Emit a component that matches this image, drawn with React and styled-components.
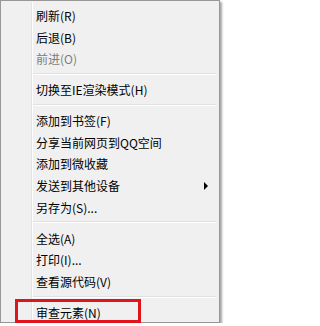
import React from 'react'
import styled, { createGlobalStyle } from 'styled-components'

const GlobalSt = createGlobalStyle`
  html, body {
    margin: 0;
    padding: 0;
    background: #ffffff;
  }
  body {
    font-family: "Noto Sans CJK SC", "Noto Sans", sans-serif;
  }
`

const groups = [
  [
    { label: '刷新(R)' },
    { label: '后退(B)' },
    { label: '前进(O)', disabled: true },
  ],
  [{ label: '切换至IE渲染模式(H)' }],
  [
    { label: '添加到书签(F)' },
    { label: '分享当前网页到QQ空间' },
    { label: '添加到微收藏' },
    { label: '发送到其他设备', sub: true },
    { label: '另存为(S)...' },
  ],
  [
    { label: '全选(A)' },
    { label: '打印(I)...' },
    { label: '查看源代码(V)' },
  ],
  [{ label: '审查元素(N)', marked: true }],
]

const App = () => {
  return (
    <>
      <GlobalSt />
      <MenuSt>
        {groups.map((group, gi) => (
          <React.Fragment key={gi}>
            {gi > 0 && <SeparatorSt />}
            {group.map(item => (
              <ItemSt key={item.label} $disabled={item.disabled}>
                <LabelSt>{item.label}</LabelSt>
                {item.sub && <ArrowSt />}
                {item.marked && <MarkSt />}
              </ItemSt>
            ))}
          </React.Fragment>
        ))}
      </MenuSt>
    </>
  )
}

export default App

const MenuSt = styled.div`
  position: relative;
  box-sizing: border-box;
  width: 220px;
  height: 323px;
  padding: 3px 2px 0 2px;
  background: #f0f0f0;
  border: 1px solid #979797;
  box-shadow: 2px 2px 2px rgba(0, 0, 0, 0.35);
  display: flex;
  flex-direction: column;

  &::before {
    content: '';
    position: absolute;
    top: 1px;
    bottom: 1px;
    left: 30px;
    width: 1px;
    background: #e2e3e3;
    border-right: 1px solid #ffffff;
  }
`

const ItemSt = styled.div`
  position: relative;
  height: 21.75px;
  flex: none;
  display: flex;
  align-items: center;
  padding: 2px 0 0 33px;
  box-sizing: border-box;
  font-size: 12px;
  color: ${p => (p.$disabled ? '#7d7d7d' : '#000000')};
`

const LabelSt = styled.span`
  line-height: 16px;
  white-space: nowrap;
`

const ArrowSt = styled.span`
  position: absolute;
  left: 201px;
  top: 8px;
  width: 0;
  height: 0;
  border-top: 4px solid transparent;
  border-bottom: 4px solid transparent;
  border-left: 4px solid #000000;
`

const SeparatorSt = styled.div`
  flex: none;
  height: 9px;
  margin-left: 29px;
  margin-right: 1px;
  display: flex;
  align-items: center;

  &::after {
    content: '';
    display: block;
    width: 100%;
    height: 1px;
    background: #e0e0e0;
    border-bottom: 1px solid #ffffff;
  }
`

const MarkSt = styled.span`
  position: absolute;
  left: 12px;
  top: -2px;
  width: 126px;
  height: 24px;
  border: 3px solid #e0141b;
  box-sizing: border-box;
`
